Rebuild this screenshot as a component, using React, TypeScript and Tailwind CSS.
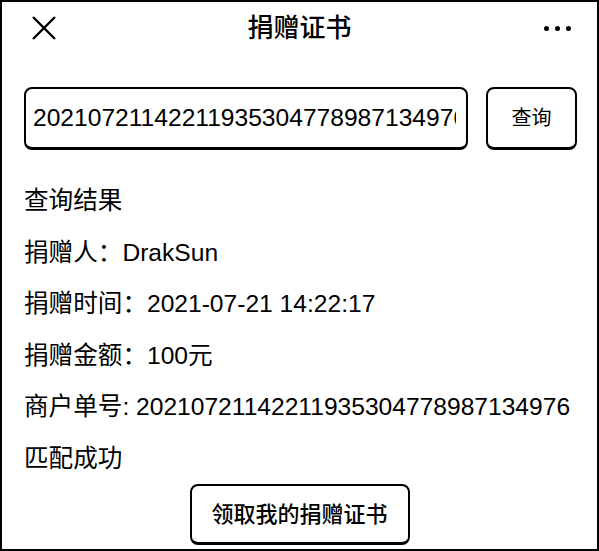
const rows = [
  '查询结果',
  '捐赠人：DrakSun',
  '捐赠时间：2021-07-21 14:22:17',
  '捐赠金额：100元',
  '商户单号: 20210721142211935304778987134976',
  '匹配成功',
]

export default function App() {
  return (
    <div
      className="w-[599px] h-[551px] border-2 border-black bg-white text-black flex flex-col overflow-hidden"
      style={{ fontFamily: '"Liberation Sans", "Noto Sans CJK SC", sans-serif' }}
    >
      <div className="h-[52px] grid grid-cols-[1fr_auto_1fr] items-center">
        <div className="pl-[30px]">
          <svg width="24" height="24" viewBox="0 0 24 24" fill="none" stroke="black" strokeWidth="2.4">
            <path d="M1 1 L23 23 M23 1 L1 23" />
          </svg>
        </div>
        <h1 className="text-[26px] font-medium leading-none">捐赠证书</h1>
        <div className="flex justify-end pr-[26px] gap-[6px]">
          <span className="w-[5px] h-[5px] rounded-full bg-black" />
          <span className="w-[5px] h-[5px] rounded-full bg-black" />
          <span className="w-[5px] h-[5px] rounded-full bg-black" />
        </div>
      </div>

      <div className="mt-[33px] pl-[22px] flex gap-[18px]">
        <input
          readOnly
          value="20210721142211935304778987134976"
          className="w-[444px] h-[63px] border-2 border-b-[3px] border-black rounded-[8px] pl-[7px] pr-[10px] text-[24.6px] outline-none bg-white"
        />
        <button className="w-[91px] h-[63px] border-2 border-b-[3px] border-black rounded-[8px] text-[20px] bg-white">
          查询
        </button>
      </div>

      <div className="mt-[26px] pl-[22px] flex flex-col">
        {rows.map((r) => (
          <div key={r} className="h-[51.5px] flex items-center text-[24.6px] whitespace-nowrap">
            {r}
          </div>
        ))}
      </div>

      <button className="-mt-[1px] mx-auto w-[220px] h-[61px] border-2 border-b-[3px] border-black rounded-[8px] text-[22px] font-medium bg-white">
        领取我的捐赠证书
      </button>
    </div>
  )
}
